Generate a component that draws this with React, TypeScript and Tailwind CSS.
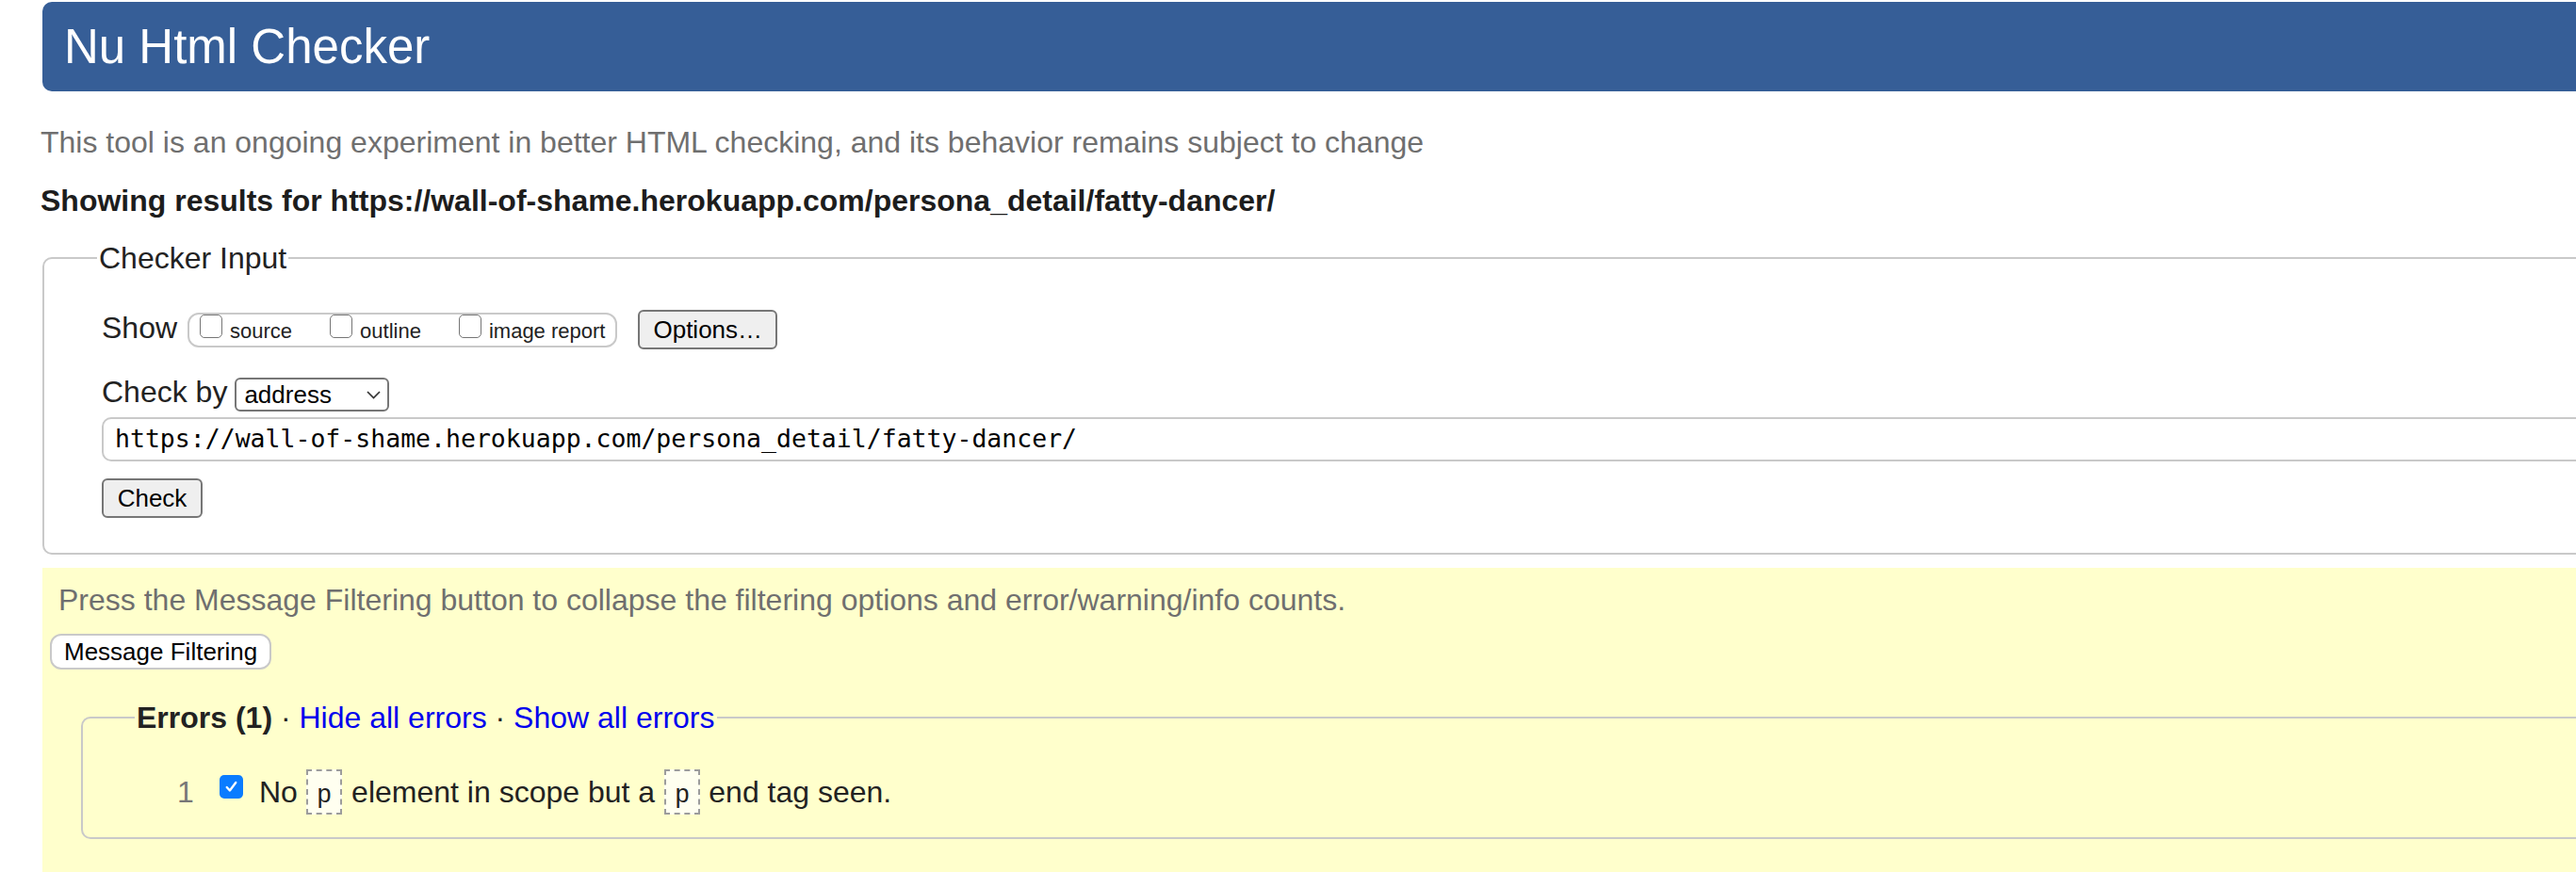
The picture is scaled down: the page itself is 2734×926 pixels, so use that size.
import React from 'react';

const url = 'https://wall-of-shame.herokuapp.com/persona_detail/fatty-dancer/';

function Box() {
  return (
    <span className="inline-block w-[24px] h-[25px] mr-[8px] align-baseline border-[1.75px] border-[#767676] rounded-[5px] bg-white" />
  );
}

function Tag({ name }: { name: string }) {
  return (
    <span className="h-[48px] px-[9px] pt-[4px] border-2 border-dashed border-[#9c9c9c] bg-[#fffff0] font-['Liberation_Mono',monospace] text-[27px] leading-[44px] text-[#222]">
      {name}
    </span>
  );
}

function App() {
  return (
    <div className="w-[2734px] h-[926px] overflow-hidden bg-white font-['Liberation_Sans',Arial,sans-serif] text-[#222]">
      <div className="w-[3100px] pl-[45px] pt-[2px]">
        <header className="h-[95px] rounded-[10px] bg-[#365e97] flex items-center pl-[23px]">
          <h1 className="text-[51px] leading-[58px] font-normal text-white">Nu Html Checker</h1>
        </header>

        <p className="mt-[36px] -ml-[2px] text-[32px] leading-[36px] text-[#6f6f6f]">
          This tool is an ongoing experiment in better HTML checking, and its behavior remains subject to change
        </p>
        <p className="mt-[26px] -ml-[2px] text-[32px] leading-[36px] font-bold text-[#1d1d1d]">
          Showing results for {url}
        </p>

        <fieldset className="mt-[25px] border-2 border-[#c9c9c9] rounded-[10px]">
          <legend className="ml-[56px] px-[2px] text-[32px] leading-[36px]">Checker Input</legend>
          <div className="pl-[61px] pt-[37px] pb-[37px]">
            <div className="flex items-center h-[42px]">
              <span className="text-[32px] leading-[36px] mb-[4px]">Show</span>
              <div className="ml-[11px] h-[37px] border-2 border-[#c9c9c9] rounded-[12px] flex items-start gap-[40px] pl-[11px] pr-[11px]">
                <label className="text-[22px] leading-[25px] whitespace-nowrap">
                  <Box />source
                </label>
                <label className="text-[22px] leading-[25px] whitespace-nowrap">
                  <Box />outline
                </label>
                <label className="text-[22px] leading-[25px] whitespace-nowrap">
                  <Box />image report
                </label>
              </div>
              <button className="ml-[22px] h-[42px] px-[14px] border-2 border-[#767676] rounded-[6px] bg-[#efefef] text-[26px] leading-none text-black">
                Options…
              </button>
            </div>

            <div className="mt-[30px] flex items-center h-[36px]">
              <span className="text-[32px] leading-[36px] mb-[6px]">Check by</span>
              <div className="ml-[8px] w-[164px] h-[36px] border-2 border-[#767676] rounded-[6px] bg-white flex items-center justify-between pl-[8px] pr-[7px]">
                <span className="text-[26px] leading-none text-black">address</span>
                <svg width="15" height="9" viewBox="0 0 15 9" fill="none">
                  <path d="M1 1l6.5 6.5L14 1" stroke="#333" strokeWidth="1.7" />
                </svg>
              </div>
            </div>

            <div className="mt-[6px] h-[47px] border-2 border-[#c9c9c9] rounded-[10px] flex items-center pl-[12px] font-['DejaVu_Sans_Mono',monospace] text-[26.5px] leading-none text-black">
              {url}
            </div>

            <button className="mt-[18px] h-[42px] w-[107px] border-2 border-[#767676] rounded-[6px] bg-[#efefef] text-[26px] leading-none text-black">
              Check
            </button>
          </div>
        </fieldset>

        <div className="mt-[14px] bg-[#ffffcc] pl-[8px] pt-[16px] pb-[80px]">
          <p className="pl-[9px] text-[32px] leading-[36px] text-[#6f6f6f]">
            Press the Message Filtering button to collapse the filtering options and error/warning/info counts.
          </p>
          <button className="mt-[18px] h-[38px] px-[13px] border-2 border-[#c9c9c9] rounded-[12px] bg-white text-[26px] leading-none text-black">
            Message Filtering
          </button>

          <fieldset className="mt-[33px] ml-[33px] border-2 border-[#c9c9c9] rounded-[10px]">
            <legend className="ml-[55px] px-[2px] text-[32px] leading-[36px] whitespace-nowrap">
              <strong className="font-bold">Errors (1)</strong> · <a className="text-[#0000ee]">Hide all errors</a> ·{' '}
              <a className="text-[#0000ee]">Show all errors</a>
            </legend>
            <div className="pl-[100px] pt-[37px] pb-[24px]">
              <div className="flex items-center h-[48px] text-[32px] leading-[36px]">
                <span className="w-[45px] text-[#777]">1</span>
                <span className="w-[25px] h-[25px] mb-[12px] rounded-[5px] bg-[#0a7cff] flex items-center justify-center">
                  <svg width="17" height="17" viewBox="0 0 16 16" fill="none">
                    <path d="M3.5 8.5l3 3.2 6-8" stroke="white" strokeWidth="2.2" strokeLinecap="round" strokeLinejoin="round" />
                  </svg>
                </span>
                <span className="ml-[17px]">No</span>
                <span className="ml-[9px] flex"><Tag name="p" /></span>
                <span className="ml-[10px]">element in scope but a</span>
                <span className="ml-[10px] flex"><Tag name="p" /></span>
                <span className="ml-[9px]">end tag seen.</span>
              </div>
            </div>
          </fieldset>
        </div>
      </div>
    </div>
  );
}

export default App;
